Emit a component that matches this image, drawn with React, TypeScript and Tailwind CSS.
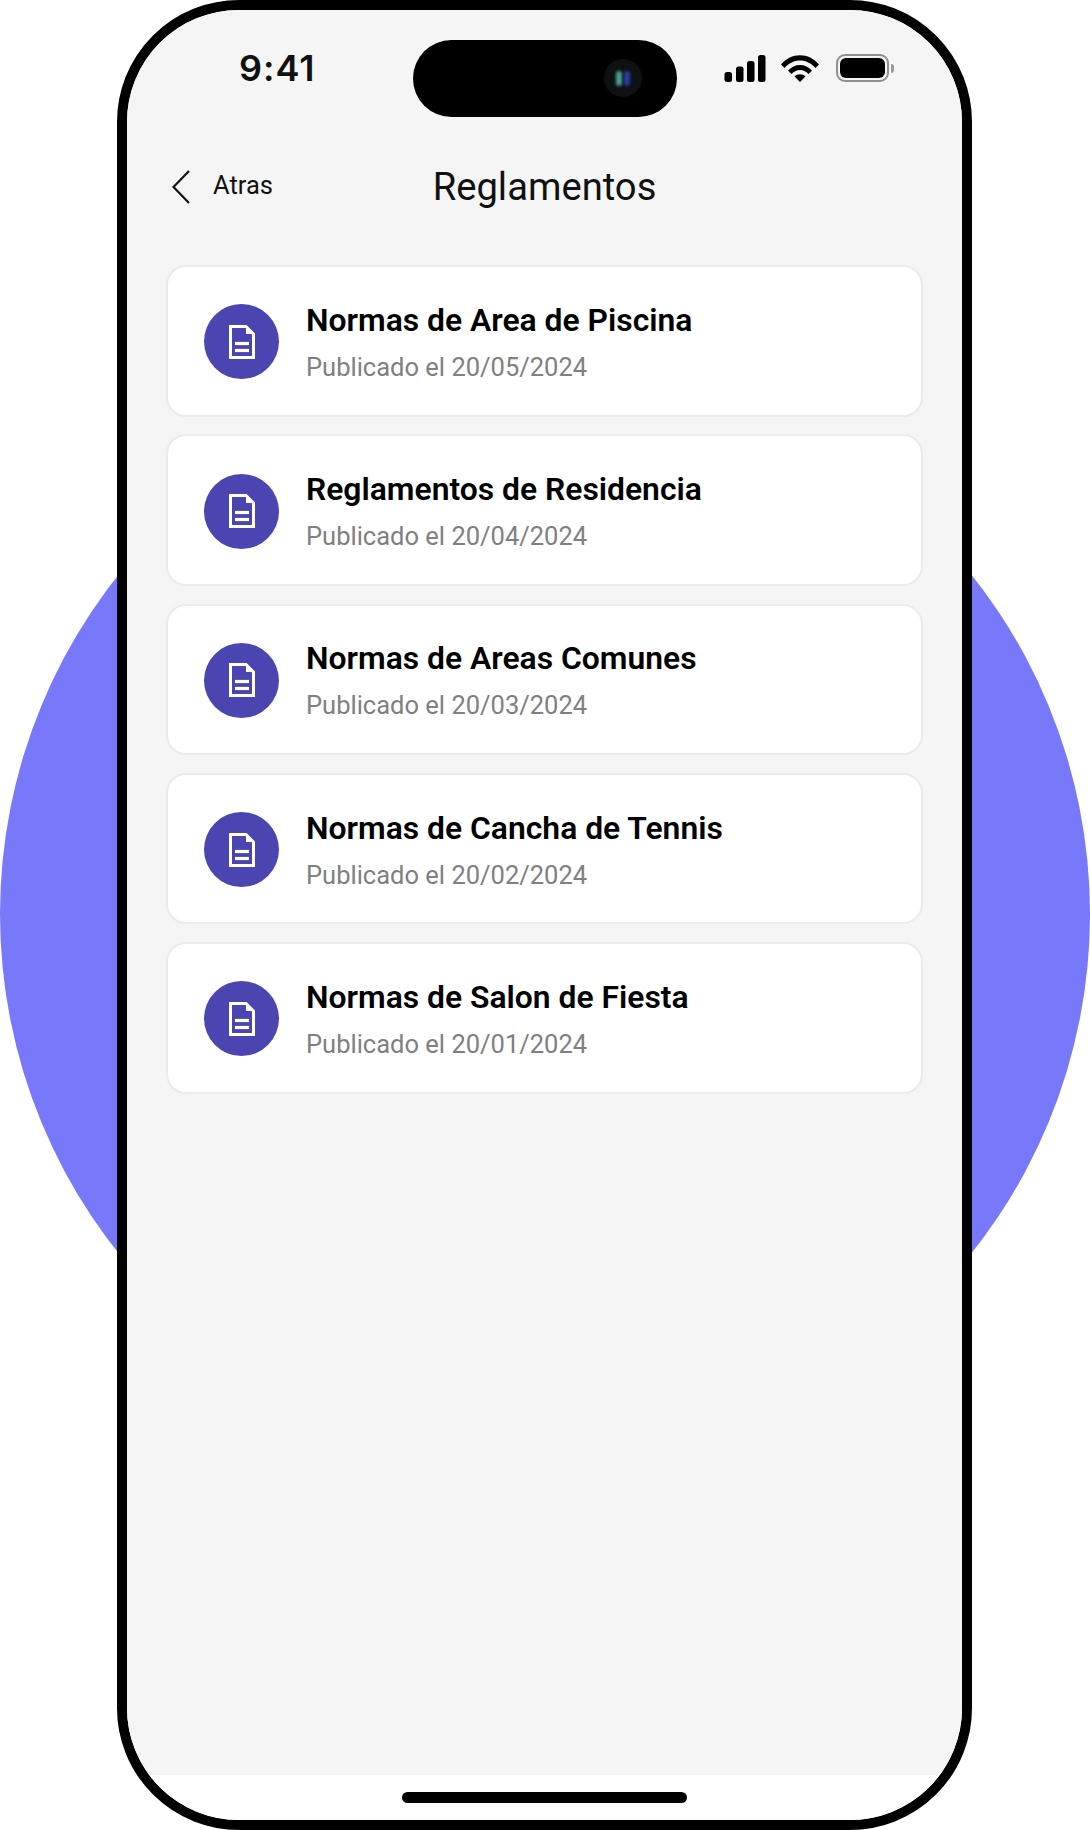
import React from "react";

const items = [
  { title: "Normas de Area de Piscina", date: "20/05/2024" },
  { title: "Reglamentos de Residencia", date: "20/04/2024" },
  { title: "Normas de Areas Comunes", date: "20/03/2024" },
  { title: "Normas de Cancha de Tennis", date: "20/02/2024" },
  { title: "Normas de Salon de Fiesta", date: "20/01/2024" },
];

function DocIcon() {
  return (
    <svg width="28" height="36" viewBox="0 0 28 36" fill="none">
      <path d="M2.5 2.5H18L25.5 10V33.5H2.5Z" stroke="white" strokeWidth="3" />
      <path d="M18 3V10H25Z" fill="white" />
      <path d="M7 19.5H21" stroke="white" strokeWidth="3.2" />
      <path d="M7 26.5H21" stroke="white" strokeWidth="3.2" />
    </svg>
  );
}

function StatusIcons() {
  return (
    <div className="flex items-center gap-[15px]">
      <svg width="42" height="27" viewBox="0 0 42 27" fill="black">
        <rect x="0.5" y="17" width="7.5" height="10" rx="2.5" />
        <rect x="12" y="11.5" width="7.5" height="15.5" rx="2.5" />
        <rect x="23" y="6" width="7.5" height="21" rx="2.5" />
        <rect x="34" y="0" width="7.5" height="27" rx="2.5" />
      </svg>
      <svg width="38" height="27" viewBox="0 0 38 27" fill="black">
        <path d="M0 9.5C10 -3 28 -3 38 9.5L34.5 13C26 3 12 3 3.5 13Z" />
        <path d="M7 15.5C13.5 8 24.5 8 31 15.5L27.5 19C22.5 13.5 15.5 13.5 10.5 19Z" />
        <path d="M13.5 21.5C16.5 18.5 21.5 18.5 24.5 21.5L19 27Z" />
      </svg>
      <div className="ml-[2px] flex items-center gap-[2px]">
        <div className="h-[28px] w-[53px] rounded-[9px] border-2 border-[#8f8f8f] p-[2px]">
          <div className="h-full w-full rounded-[6px] bg-black" />
        </div>
        <div className="h-[9px] w-[3px] rounded-r-full bg-[#9a9a9a]" />
      </div>
    </div>
  );
}

export default function App() {
  return (
    <div className="relative h-[1830px] w-[1090px] overflow-hidden bg-white font-['Roboto',sans-serif]">
      <div className="absolute left-0 top-[369px] h-[1090px] w-[1090px] rounded-full bg-[#7878fa]" />

      <div className="relative ml-[117px] flex h-[1830px] w-[855px] flex-col overflow-hidden rounded-[122px] border-[10px] border-black bg-white">
        <div className="flex flex-1 flex-col bg-[#f5f5f5]">
          <div className="flex items-start pl-[112px] pt-[30px]">
            <span className="w-[174px] font-['Inter',sans-serif] text-[36px] font-semibold leading-[56px] tracking-[1px] text-[#111]">
              9:41
            </span>
            <div className="relative h-[77px] w-[264px] rounded-full bg-black">
              <div className="absolute right-[35px] top-[19px] flex h-[38px] w-[38px] items-center justify-center gap-[2px] rounded-full bg-[#0d1112]">
                <div className="h-[15px] w-[6px] rounded-full bg-[#4f9f8f] blur-[1.5px]" />
                <div className="h-[15px] w-[6px] rounded-full bg-[#2a3f9f] blur-[1.5px]" />
              </div>
            </div>
            <div className="ml-[47px] flex h-[56px] items-center">
              <StatusIcons />
            </div>
          </div>

          <div className="relative mt-[40px] flex h-[62px] items-center pl-[45px]">
            <svg className="-mt-[2px]" width="18" height="34" viewBox="0 0 18 34" fill="none">
              <path d="M17 1L1.5 17L17 33" stroke="#111" strokeWidth="2.2" />
            </svg>
            <span className="ml-[23px] -mt-[5px] text-[25.5px] text-[#111]">Atras</span>
            <h1 className="absolute inset-x-0 text-center text-[38.2px] font-normal text-[#111]">Reglamentos</h1>
          </div>

          <div className="mt-[46px] flex flex-col gap-[17.75px] px-[39px]">
            {items.map((item) => (
              <div
                key={item.title}
                className="flex h-[151.5px] items-center rounded-[20px] border-2 border-[#ebebeb] bg-white pl-[36px] pt-[2px]"
              >
                <div className="flex h-[75px] w-[75px] items-center justify-center rounded-full bg-[#4a45b0]">
                  <DocIcon />
                </div>
                <div className="ml-[27px] flex flex-col">
                  <span className="text-[31.85px] font-semibold leading-[40px] text-black">{item.title}</span>
                  <span className="mt-[10px] text-[25.5px] leading-[34px] text-[#808080]">
                    Publicado el {item.date}
                  </span>
                </div>
              </div>
            ))}
          </div>
        </div>

        <div className="flex h-[45px] items-start justify-center bg-white pt-[17px]">
          <div className="h-[11px] w-[285px] rounded-full bg-black" />
        </div>
      </div>
    </div>
  );
}
